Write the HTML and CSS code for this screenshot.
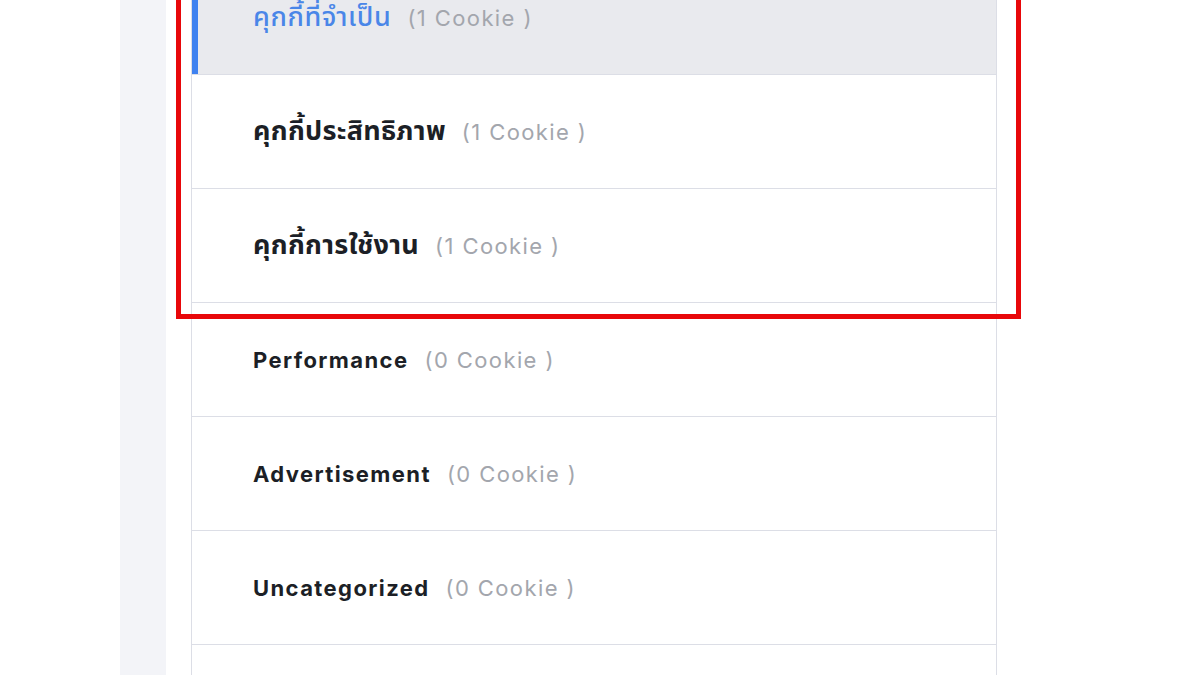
FILE: index.html
```html
<!DOCTYPE html>
<html lang="th">
<head>
<meta charset="utf-8">
<link rel="stylesheet" href="styles.css">
</head>
<body>
<div class="page">
  <div class="strip"></div>
  <div class="list">
    <div class="row active"><span class="name th">คุกกี้ที่จำเป็น</span><span class="count">(1 Cookie )</span></div>
    <div class="row"><span class="name th">คุกกี้ประสิทธิภาพ</span><span class="count">(1 Cookie )</span></div>
    <div class="row"><span class="name th">คุกกี้การใช้งาน</span><span class="count">(1 Cookie )</span></div>
    <div class="row"><span class="name">Performance</span><span class="count">(0 Cookie )</span></div>
    <div class="row"><span class="name">Advertisement</span><span class="count">(0 Cookie )</span></div>
    <div class="row"><span class="name">Uncategorized</span><span class="count">(0 Cookie )</span></div>
    <div class="row"></div>
  </div>
  <div class="highlight"></div>
</div>
</body>
</html>
```
FILE: styles.css
```css
html, body {
  margin: 0;
  padding: 0;
  background: #ffffff;
  overflow: hidden;
}
body {
  width: 1200px;
  height: 675px;
  font-family: Inter, "Noto Sans Thai", "Noto Sans", sans-serif;
}
.page {
  position: relative;
  display: flex;
  gap: 25px;
  padding-left: 120px;
  height: 675px;
  overflow: hidden;
}
.strip {
  width: 46px;
  background: #f3f4f8;
  flex: none;
}
.list {
  width: 804px;
  margin-top: -39px;
  border-left: 1px solid #dcdee6;
  border-right: 1px solid #dcdee6;
  flex: none;
}
.row {
  height: 113px;
  border-bottom: 1px solid #dcdee6;
  display: flex;
  align-items: center;
  gap: 16px;
  padding-left: 61px;
  font-size: 22px;
  letter-spacing: 1.4px;
  position: relative;
}
.row.active {
  background: #e9eaee;
}
.row.active::before {
  content: "";
  position: absolute;
  left: 0;
  top: 0;
  bottom: 0;
  width: 6px;
  background: #3f82f0;
}
.name {
  font-weight: 700;
  color: #1c1f26;
}
.name.th {
  font-size: 27px;
  letter-spacing: 0.3px;
}
.row.active .name {
  color: #4a86e8;
  font-weight: 500;
  letter-spacing: 0.6px;
}
.count {
  color: #a3a6ad;
  font-weight: 400;
}
.highlight {
  position: absolute;
  left: 176px;
  top: -20px;
  width: 835px;
  height: 329px;
  border: 5px solid #e8070a;
}
```
